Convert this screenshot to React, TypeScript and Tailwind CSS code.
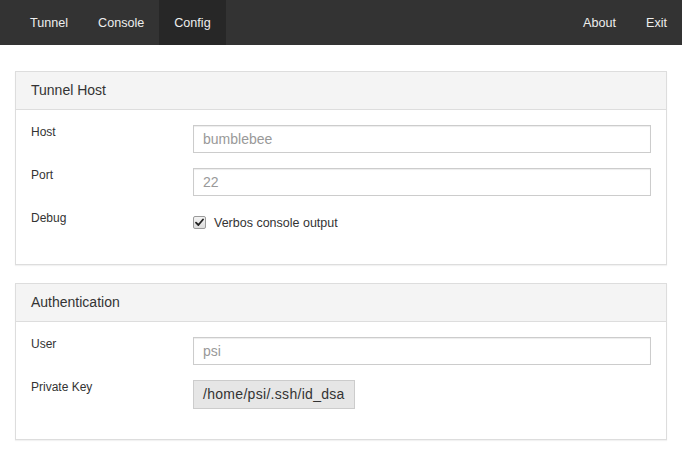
import type { ReactNode } from "react";

const font = { fontFamily: '"Liberation Sans", Arial, sans-serif' };

function NavItem({ label, active }: { label: string; active?: boolean }) {
  return (
    <a
      href="#"
      className={
        "flex h-full items-center px-[15px] pt-[2px] text-[12.6px] text-[#eeeeee] " +
        (active ? "bg-[#272727]" : "")
      }
    >
      {label}
    </a>
  );
}

function Panel({ title, children }: { title: string; children: ReactNode }) {
  return (
    <section className="border border-[#dddddd] bg-white shadow-[0_1px_1px_rgba(0,0,0,0.05)]">
      <div className="flex h-[38px] items-center border-b border-[#dddddd] bg-[#f4f4f4] px-[15px] text-[14px] text-[#333333]">
        {title}
      </div>
      <div className="px-[15px] pt-[15px] pb-[15px]">{children}</div>
    </section>
  );
}

function Row({ label, children }: { label: string; children: ReactNode }) {
  return (
    <div className="mb-[15px] grid grid-cols-[162px_1fr]">
      <label className="text-[12px] leading-[14px] text-[#333333]">{label}</label>
      <div>{children}</div>
    </div>
  );
}

function TextField({ value }: { value: string }) {
  return (
    <input
      readOnly
      value={value}
      className="block h-[28px] w-full border border-[#cccccc] bg-white pl-[9px] text-[14px] text-[#999999] shadow-[inset_0_1px_1px_rgba(0,0,0,0.075)] outline-none"
      style={font}
    />
  );
}

export default function App() {
  return (
    <div className="min-h-[463px] bg-white" style={font}>
      <nav className="flex h-[45px] items-stretch bg-[#333333] pl-[15px]">
        <NavItem label="Tunnel" />
        <NavItem label="Console" />
        <NavItem label="Config" active />
        <div className="flex-1" />
        <NavItem label="About" />
        <NavItem label="Exit" />
      </nav>

      <main className="flex flex-col gap-[18px] px-[15px] pt-[26px]">
        <Panel title="Tunnel Host">
          <Row label="Host">
            <TextField value="bumblebee" />
          </Row>
          <Row label="Port">
            <TextField value="22" />
          </Row>
          <Row label="Debug">
            <div className="flex h-[23px] items-start gap-[8px] pt-[5px]">
              <span className="flex h-[13px] w-[13px] items-center justify-center rounded-[2px] border border-[#9a9a9a] bg-gradient-to-b from-[#f4f4f4] to-[#dcdcdc]">
                <svg width="9" height="9" viewBox="0 0 9 9" aria-hidden>
                  <path
                    d="M1 4.6 3.4 7 8 1.5"
                    fill="none"
                    stroke="#222222"
                    strokeWidth="1.8"
                    strokeLinecap="round"
                    strokeLinejoin="round"
                  />
                </svg>
              </span>
              <span className="text-[12.5px] leading-[14px] text-[#333333]">
                Verbos console output
              </span>
            </div>
          </Row>
        </Panel>

        <Panel title="Authentication">
          <Row label="User">
            <TextField value="psi" />
          </Row>
          <Row label="Private Key">
            <button
              type="button"
              className="flex h-[29px] items-center border border-[#cccccc] bg-[#e6e6e6] px-[9px] text-[14px] tracking-[0.3px] text-[#333333]"
              style={font}
            >
              /home/psi/.ssh/id_dsa
            </button>
          </Row>
        </Panel>
      </main>
    </div>
  );
}
